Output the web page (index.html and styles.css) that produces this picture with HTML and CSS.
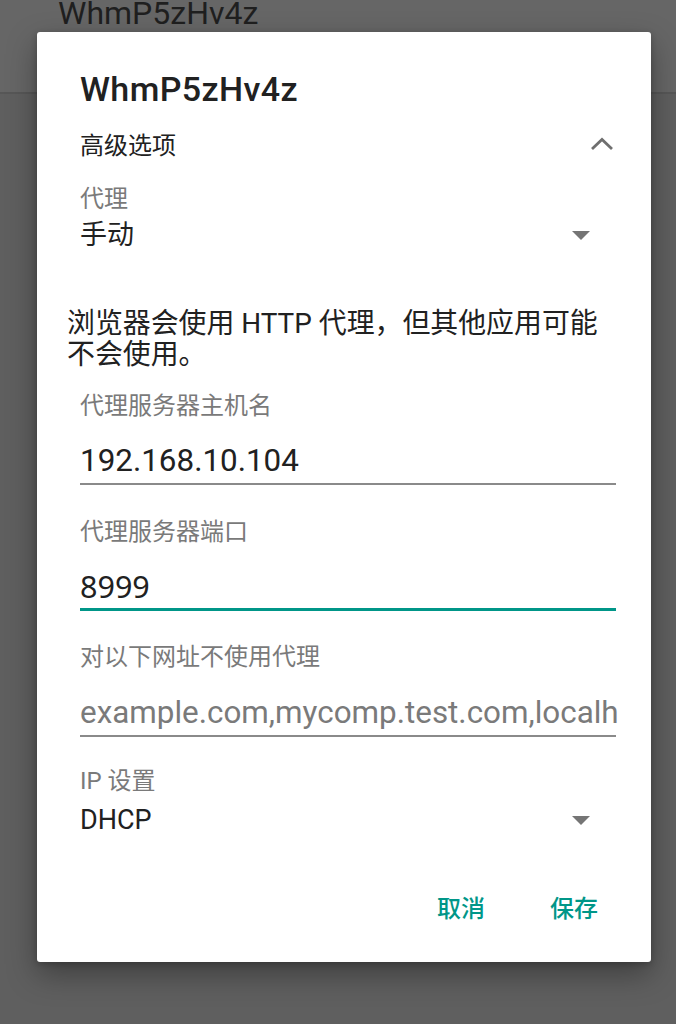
FILE: index.html
```html
<!DOCTYPE html>
<html lang="zh-CN">
<head>
<meta charset="utf-8">
<title>WhmP5zHv4z</title>
<link rel="stylesheet" href="styles.css">
</head>
<body>
<div class="page">
  <header class="topbar"><span class="topbar-title">WhmP5zHv4z</span></header>
</div>
<div class="dialog">
  <div class="title">WhmP5zHv4z</div>
  <div class="adv-row">
    <span class="adv-text">高级选项</span>
    <svg class="chevron" width="24" height="14" viewBox="0 0 24 14"><path d="M2 12 L12 2.5 L22 12" fill="none" stroke="#6f6f6f" stroke-width="2.8"/></svg>
  </div>
  <div class="label l-proxy">代理</div>
  <div class="spinner s-proxy">
    <span class="value">手动</span>
    <span class="tri"></span>
  </div>
  <p class="note">浏览器会使用 HTTP 代理，但其他应用可能不会使用。</p>
  <div class="label l-host">代理服务器主机名</div>
  <div class="field f-host"><div class="clip"><span class="input">192.168.10.104</span></div></div>
  <div class="label l-port">代理服务器端口</div>
  <div class="field focused f-port"><div class="clip"><span class="input port">8999</span></div></div>
  <div class="label l-excl">对以下网址不使用代理</div>
  <div class="field f-excl"><div class="clip"><span class="input hint">example.com,mycomp.test.com,localhost</span></div></div>
  <div class="label l-ip">IP 设置</div>
  <div class="spinner s-ip">
    <span class="value">DHCP</span>
    <span class="tri"></span>
  </div>
  <div class="actions">
    <span class="btn">取消</span>
    <span class="btn">保存</span>
  </div>
</div>
</body>
</html>
```
FILE: styles.css
```css
html, body {
  margin: 0;
  padding: 0;
}
body {
  width: 676px;
  height: 1024px;
  background: #5f5f5f;
  font-family: Roboto, "Noto Sans CJK SC", sans-serif;
  overflow: hidden;
  position: relative;
}
.topbar {
  height: 93px;
  background: #666666;
  border-bottom: 2px solid #575757;
  padding-left: 58px;
}
.topbar-title {
  display: block;
  font-size: 32px;
  line-height: 28px;
  color: #1f1f1f;
  margin-top: -1px;
}
.dialog {
  position: absolute;
  left: 37px;
  top: 32px;
  width: 614px;
  box-sizing: border-box;
  background: #ffffff;
  border-radius: 3px;
  box-shadow: 0 12px 30px rgba(0,0,0,0.35), 0 2px 6px rgba(0,0,0,0.2);
  padding: 37px 35px 29px 43px;
  color: #212121;
}
.title {
  font-size: 34px;
  font-weight: 500;
  line-height: 40px;
  height: 40px;
  letter-spacing: 0.4px;
}
.adv-row {
  margin-top: 13px;
  height: 48px;
  display: flex;
  align-items: center;
  justify-content: space-between;
}
.adv-text {
  font-size: 24px;
  line-height: 48px;
}
.chevron {
  margin-right: 2px;
  margin-top: -4px;
}
.label {
  font-size: 24px;
  line-height: 32px;
  height: 32px;
  color: #7a7a7a;
}
.l-proxy { margin-top: 13px; }
.spinner {
  display: flex;
  align-items: center;
  justify-content: space-between;
  height: 36px;
}
.s-proxy { margin-top: 2px; }
.value {
  font-size: 27px;
  line-height: 36px;
  white-space: nowrap;
}
.tri {
  width: 0;
  height: 0;
  border-left: 9px solid transparent;
  border-right: 9px solid transparent;
  border-top: 9px solid #757575;
  margin-right: 26px;
}
.note {
  margin: 55px 0 0 -13px;
  font-size: 27.9px;
  line-height: 31px;
  color: #212121;
  width: 545px;
}
.l-host { margin-top: 20px; }
.field {
  height: 40px;
  padding-bottom: 2px;
  border-bottom: 2px solid #8a8a8a;
}
.clip {
  height: 40px;
  margin-right: -3px;
  overflow: hidden;
}
.input {
  display: block;
  font-size: 31.4px;
  line-height: 40px;
  white-space: nowrap;
}
.f-host { margin-top: 19px; }
.focused {
  border-bottom: 3px solid #009688;
}
.port {
  font-family: "Noto Sans", Roboto, sans-serif;
  font-size: 30.5px;
}
.l-port { margin-top: 31px; }
.f-port { margin-top: 18px; }
.l-excl { margin-top: 30px; }
.f-excl { margin-top: 20px; }
.hint { color: #7a7a7a; }
.l-ip { margin-top: 28px; }
.s-ip { margin-top: 5px; }
.actions {
  margin-top: 47px;
  height: 48px;
  display: flex;
  align-items: center;
  justify-content: flex-end;
  gap: 65px;
  padding-right: 18px;
}
.btn {
  font-size: 24px;
  font-weight: 500;
  color: #009688;
  line-height: 48px;
}
```
